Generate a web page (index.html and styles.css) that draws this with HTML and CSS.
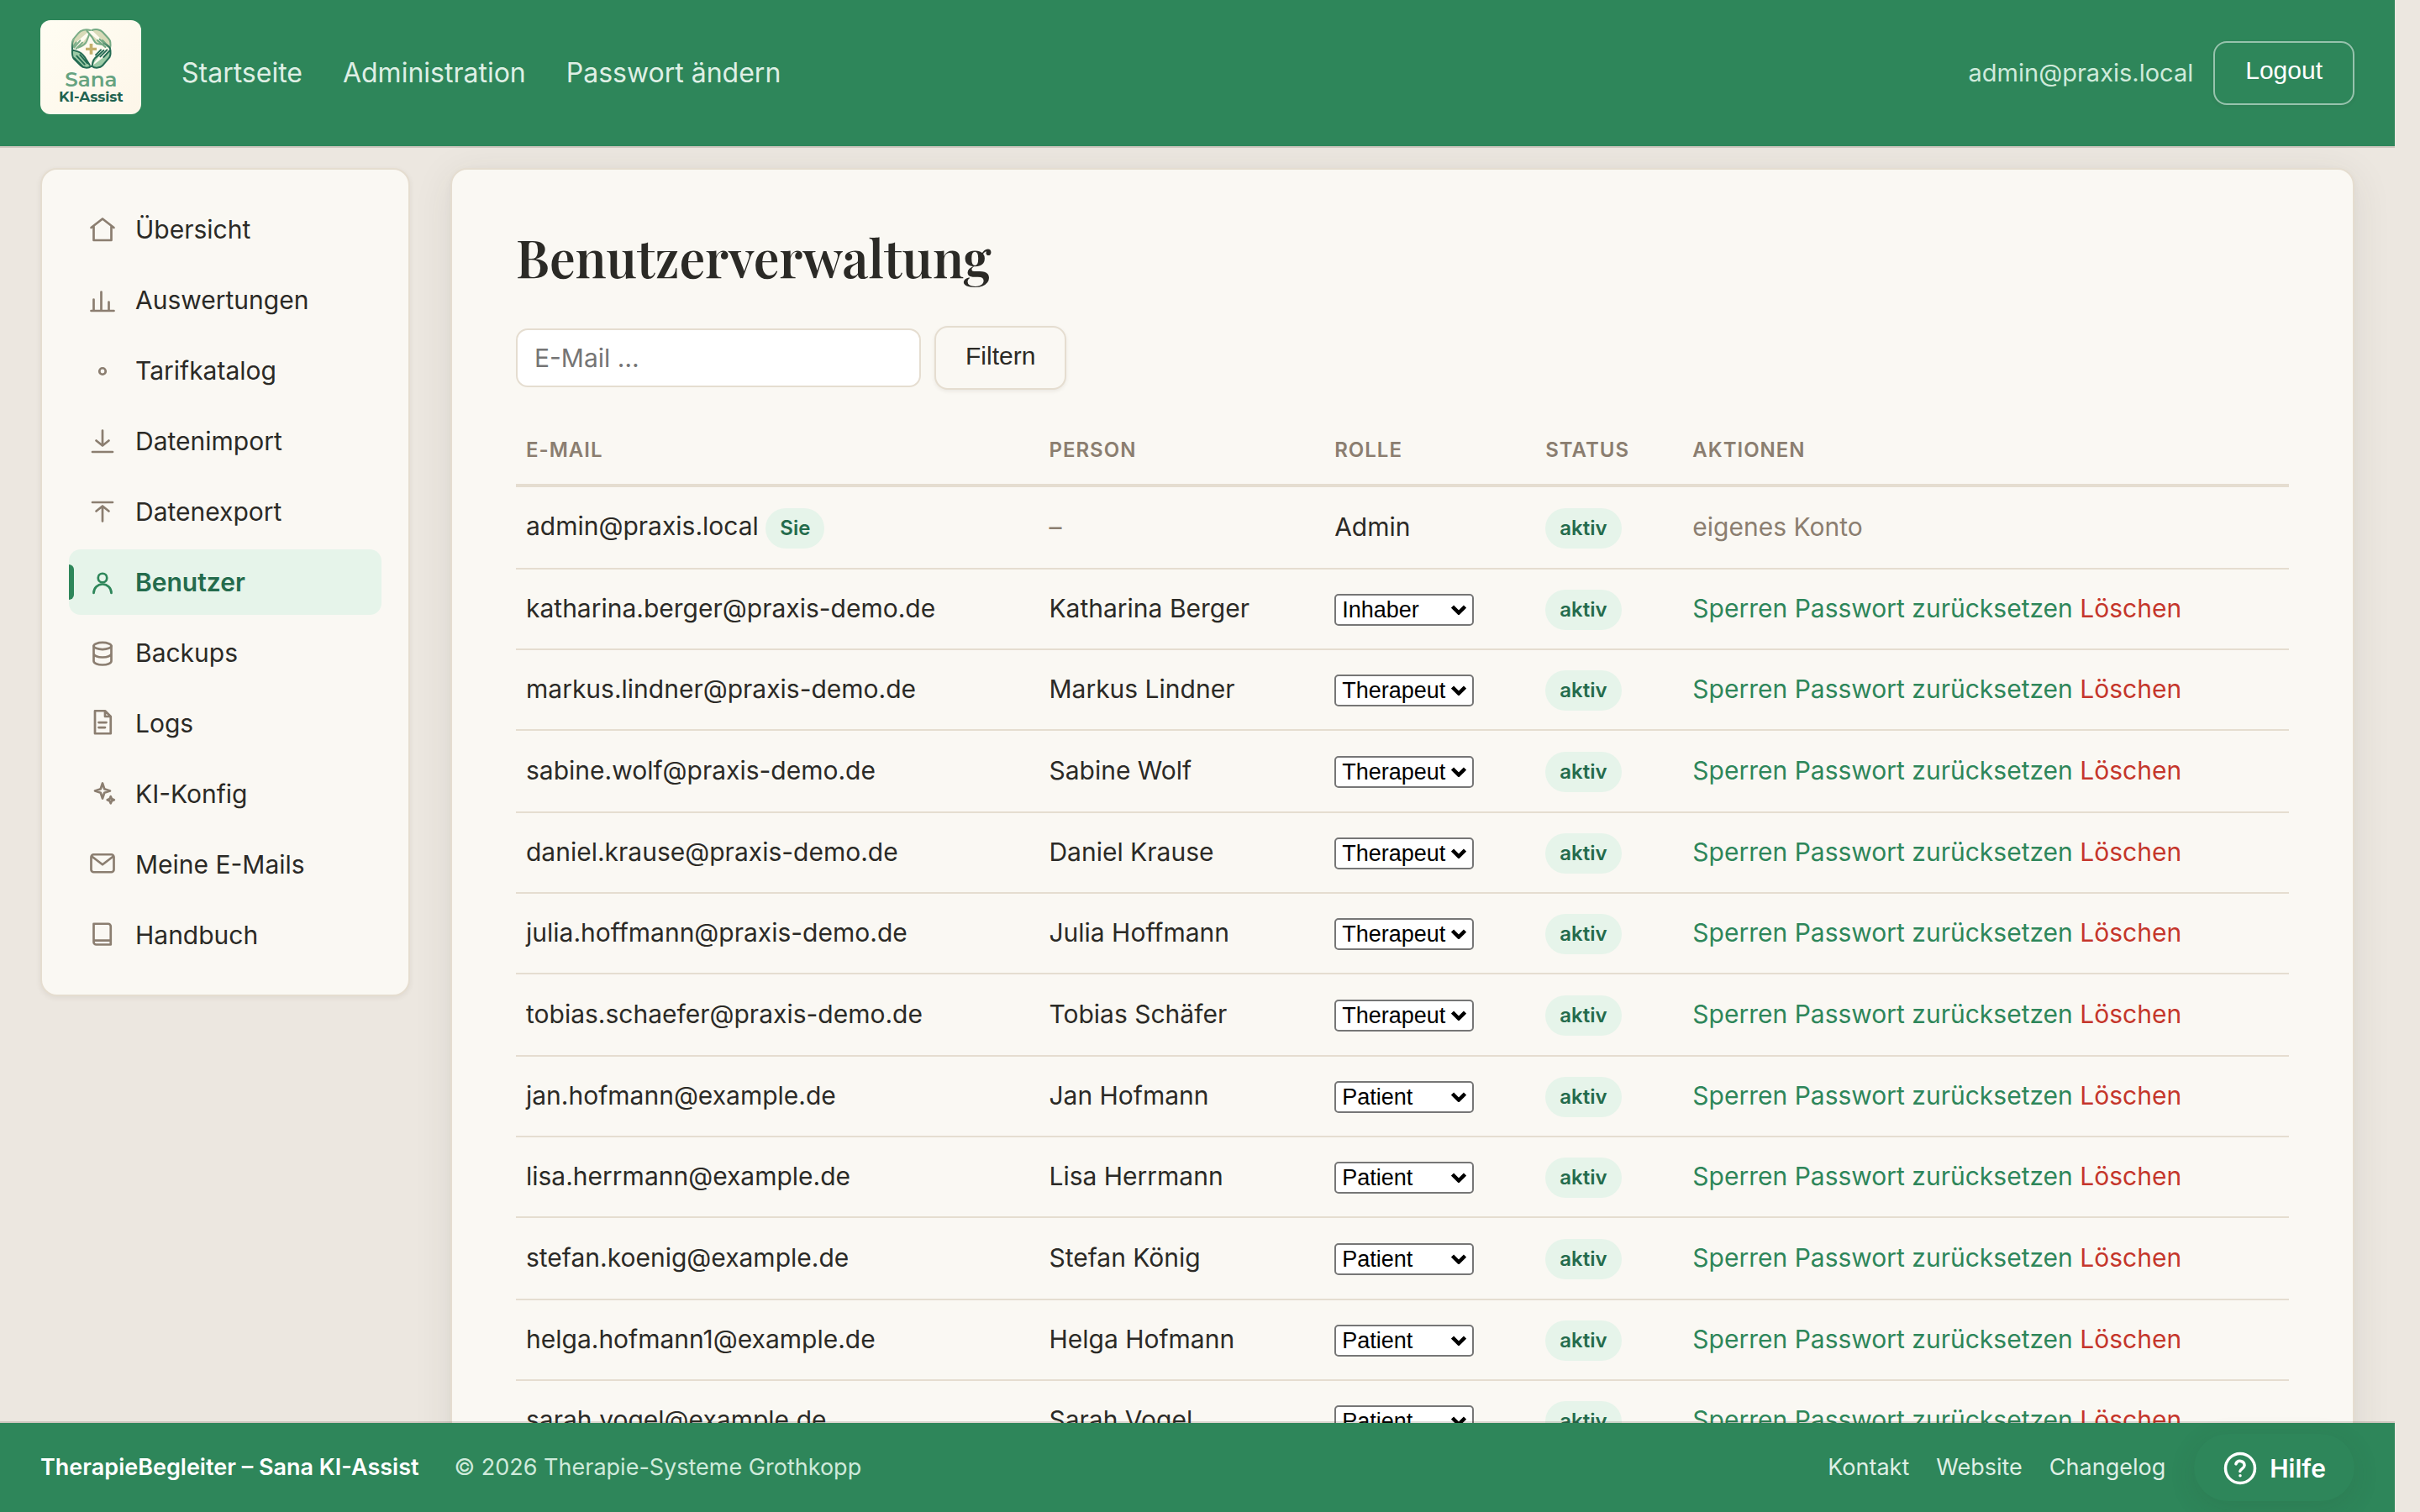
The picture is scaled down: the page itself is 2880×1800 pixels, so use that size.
FILE: index.html
```html
<!DOCTYPE html>
<html lang="de">
<head>
<meta charset="utf-8">
<title>Benutzerverwaltung</title>
<link rel="stylesheet" href="styles.css">
</head>
<body>
<header class="topbar">
  <a class="logo" href="#" aria-label="Sana KI-Assist">
    <svg viewBox="24 24 360 336" aria-hidden="true">
      <defs>
        <linearGradient id="ring" x1="0" y1="0" x2="0" y2="1"><stop offset="0" stop-color="#86b48e"/><stop offset="1" stop-color="#1f6650"/></linearGradient>
      </defs>
      <g stroke-linejoin="round" stroke-linecap="round" stroke-width="6" fill="none">
        <path fill="#d8dab8" stroke="#7dae88" d="M202 60C186 54 168 60 160 70L142 92C136 101 137 108 138 122L152 103M145 122L166 97M152 126L174 104M160 122C176 116 186 110 190 98L198 76"/>
        <path fill="#d8dab8" stroke="#74a983" d="M208 60C222 54 238 58 246 66L268 90C276 99 276 110 273 124L246 96M264 118L236 92M256 120L228 96M250 112L226 108C216 104 216 96 208 84L190 62"/>
        <path fill="#9ccaa6" stroke="#246b53" d="M206 188C194 198 176 194 168 186L144 162C137 154 137 144 138 130L158 136C172 140 178 150 184 158L200 184M154 152L182 182M166 148L192 178M146 160L176 190"/>
        <path fill="#9ccaa6" stroke="#246b53" d="M208 188C220 198 238 194 246 186L268 160C277 152 275 142 274 130L250 156M262 130L238 154M250 132L228 152C216 160 210 172 210 184M240 130L222 148"/>
        <path stroke="url(#ring)" d="M138 126C137 112 137 104 143 94M273 126C270 114 262 112 250 106"/>
      </g>
      <path fill="#c4b06c" d="M200 108h11v14h14v10h-14v14h-11v-14h-14v-10h14z"/>
      <text class="logo-name" x="205" y="262" text-anchor="middle">Sana</text>
      <text class="logo-sub" x="205" y="315" text-anchor="middle">KI-Assist</text>
    </svg>
  </a>
  <nav class="topnav" aria-label="Hauptnavigation">
    <a href="#">Startseite</a>
    <a href="#">Administration</a>
    <a href="#">Passwort ändern</a>
  </nav>
  <div class="account">
    <span class="account-mail">admin@praxis.local</span>
    <button class="btn btn-ghost" type="button">Logout</button>
  </div>
</header>

<div class="scroll">
  <nav class="card sidebar" aria-label="Administration">
    <a href="#"><svg class="icon" viewBox="0 0 24 24"><path d="M3 10l9-7 9 7M5 9v11h14V9"/></svg>Übersicht</a>
    <a href="#"><svg class="icon" viewBox="0 0 24 24"><path d="M3 20h18M5 20v-9M11 20V5M17 20v-7"/></svg>Auswertungen</a>
    <a href="#"><svg class="icon" viewBox="0 0 24 24"><circle cx="12" cy="12" r="2.5"/></svg>Tarifkatalog</a>
    <a href="#"><svg class="icon" viewBox="0 0 24 24"><path d="M12 3v12M7 11l5 4 5-4M4 20h16"/></svg>Datenimport</a>
    <a href="#"><svg class="icon" viewBox="0 0 24 24"><path d="M12 19V7M7 11l5-4 5 4M4 4h16"/></svg>Datenexport</a>
    <a href="#" class="active" aria-current="page"><svg class="icon" viewBox="0 0 24 24"><circle cx="12" cy="8" r="3.5"/><path d="M5 20a7 7 0 0 1 14 0"/></svg>Benutzer</a>
    <a href="#"><svg class="icon" viewBox="0 0 24 24"><ellipse cx="12" cy="6" rx="7" ry="2.7"/><path d="M5 6v12c0 1.700 3.100 3 7 3s7-1.300 7-3V6M5 12c0 1.700 3.100 3 7 3s7-1.300 7-3"/></svg>Backups</a>
    <a href="#"><svg class="icon" viewBox="0 0 24 24"><path d="M6 1.500h8l4.500 4.500v13.500H6zM14 1.500v4.500h4.500M9 10.700h6M9 14.700h5"/></svg>Logs</a>
    <a href="#"><svg class="icon" viewBox="0 0 24 24"><path d="M12 3l1.500 4.500L18 9l-4.500 1.500L12 15l-1.500-4.500L6 9l4.500-1.500zM18.500 13.500l.8 1.900 1.900.8-1.900.8-.8 1.900-.8-1.900-1.900-.8 1.900-.8z"/></svg>KI-Konfig</a>
    <a href="#"><svg class="icon" viewBox="0 0 24 24"><rect x="3" y="3.500" width="18" height="14" rx="2"/><path d="M3.500 5l8.500 6.500L20.500 5"/></svg>Meine E-Mails</a>
    <a href="#"><svg class="icon" viewBox="0 0 24 24"><path d="M5 2.500h11.500a2 2 0 0 1 2 2V19H7a2 2 0 0 1-2-2zM5.500 15.800h13"/></svg>Handbuch</a>
  </nav>

  <main class="card content">
    <h1>Benutzerverwaltung</h1>
    <form class="filter">
      <input type="text" aria-label="E-Mail" placeholder="E-Mail …">
      <button class="btn" type="button">Filtern</button>
    </form>
    <table>
      <colgroup><col class="c-mail"><col class="c-person"><col class="c-role"><col class="c-status"><col></colgroup>
      <thead><tr><th>E-Mail</th><th>Person</th><th>Rolle</th><th>Status</th><th>Aktionen</th></tr></thead>
      <tbody>
        <tr><td>admin@praxis.local <span class="badge">Sie</span></td><td class="muted">–</td><td>Admin</td><td><span class="badge">aktiv</span></td><td class="muted">eigenes Konto</td></tr>
        <tr><td>katharina.berger@praxis-demo.de</td><td>Katharina Berger</td><td><select aria-label="Rolle"><option>Inhaber</option></select></td><td><span class="badge">aktiv</span></td><td><a href="#">Sperren</a> <a href="#">Passwort zurücksetzen</a> <a href="#" class="danger">Löschen</a></td></tr>
        <tr><td>markus.lindner@praxis-demo.de</td><td>Markus Lindner</td><td><select aria-label="Rolle"><option>Therapeut</option></select></td><td><span class="badge">aktiv</span></td><td><a href="#">Sperren</a> <a href="#">Passwort zurücksetzen</a> <a href="#" class="danger">Löschen</a></td></tr>
        <tr><td>sabine.wolf@praxis-demo.de</td><td>Sabine Wolf</td><td><select aria-label="Rolle"><option>Therapeut</option></select></td><td><span class="badge">aktiv</span></td><td><a href="#">Sperren</a> <a href="#">Passwort zurücksetzen</a> <a href="#" class="danger">Löschen</a></td></tr>
        <tr><td>daniel.krause@praxis-demo.de</td><td>Daniel Krause</td><td><select aria-label="Rolle"><option>Therapeut</option></select></td><td><span class="badge">aktiv</span></td><td><a href="#">Sperren</a> <a href="#">Passwort zurücksetzen</a> <a href="#" class="danger">Löschen</a></td></tr>
        <tr><td>julia.hoffmann@praxis-demo.de</td><td>Julia Hoffmann</td><td><select aria-label="Rolle"><option>Therapeut</option></select></td><td><span class="badge">aktiv</span></td><td><a href="#">Sperren</a> <a href="#">Passwort zurücksetzen</a> <a href="#" class="danger">Löschen</a></td></tr>
        <tr><td>tobias.schaefer@praxis-demo.de</td><td>Tobias Schäfer</td><td><select aria-label="Rolle"><option>Therapeut</option></select></td><td><span class="badge">aktiv</span></td><td><a href="#">Sperren</a> <a href="#">Passwort zurücksetzen</a> <a href="#" class="danger">Löschen</a></td></tr>
        <tr><td>jan.hofmann@example.de</td><td>Jan Hofmann</td><td><select aria-label="Rolle"><option>Patient</option></select></td><td><span class="badge">aktiv</span></td><td><a href="#">Sperren</a> <a href="#">Passwort zurücksetzen</a> <a href="#" class="danger">Löschen</a></td></tr>
        <tr><td>lisa.herrmann@example.de</td><td>Lisa Herrmann</td><td><select aria-label="Rolle"><option>Patient</option></select></td><td><span class="badge">aktiv</span></td><td><a href="#">Sperren</a> <a href="#">Passwort zurücksetzen</a> <a href="#" class="danger">Löschen</a></td></tr>
        <tr><td>stefan.koenig@example.de</td><td>Stefan König</td><td><select aria-label="Rolle"><option>Patient</option></select></td><td><span class="badge">aktiv</span></td><td><a href="#">Sperren</a> <a href="#">Passwort zurücksetzen</a> <a href="#" class="danger">Löschen</a></td></tr>
        <tr><td>helga.hofmann1@example.de</td><td>Helga Hofmann</td><td><select aria-label="Rolle"><option>Patient</option></select></td><td><span class="badge">aktiv</span></td><td><a href="#">Sperren</a> <a href="#">Passwort zurücksetzen</a> <a href="#" class="danger">Löschen</a></td></tr>
        <tr><td>sarah.vogel@example.de</td><td>Sarah Vogel</td><td><select aria-label="Rolle"><option>Patient</option></select></td><td><span class="badge">aktiv</span></td><td><a href="#">Sperren</a> <a href="#">Passwort zurücksetzen</a> <a href="#" class="danger">Löschen</a></td></tr>
      </tbody>
    </table>
  </main>
</div>

<footer class="footer">
  <strong>TherapieBegleiter – Sana KI-Assist</strong>
  <span class="copy">© 2026 Therapie-Systeme Grothkopp</span>
  <nav class="footnav" aria-label="Fußzeile">
    <a href="#">Kontakt</a>
    <a href="#">Website</a>
    <a href="#">Changelog</a>
  </nav>
  <button class="help" type="button">
    <svg viewBox="0 0 24 24" aria-hidden="true"><circle cx="12" cy="12" r="10"/><path d="M9.100 9a3 3 0 0 1 5.800 1c0 2-3 2.500-3 4M12 17h.01"/></svg>
    Hilfe
  </button>
</footer>
</body>
</html>
```
FILE: styles.css
```css
:root {
  --green: #2e865a;
  --green-dark: #246b4c;
  --green-soft: #e6f4ea;
  --paper: #faf8f3;
  --line: #e5ddd0;
  --ink: #2b2a26;
  --muted: #8b7e70;
  --bg: #ece7e0;
}

* { box-sizing: border-box; }

body {
  margin: 0;
  height: 100vh;
  padding-right: 30px;
  display: flex;
  flex-direction: column;
  overflow: hidden;
  background: var(--bg);
  color: var(--ink);
  font: 30px/48px Inter, "Liberation Sans", sans-serif;
}

a { color: var(--green); text-decoration: none; }

/* Header */
.topbar {
  position: relative;
  z-index: 2;
  flex: none;
  display: flex;
  align-items: center;
  gap: 48px;
  height: 174px;
  padding: 24px 48px;
  background: var(--green);
  box-shadow: 0 2px 0 rgba(60, 40, 30, .17);
}
.logo {
  align-self: flex-start;
  width: 120px;
  height: 112px;
  border-radius: 12px;
  background: linear-gradient(135deg, #fffdf3, #fdf6e9);
  overflow: hidden;
}
.logo svg { display: block; width: 100%; height: 100%; }
.logo-name { font: 600 74px Montserrat, Inter, sans-serif; fill: #66a380; }
.logo-sub { font: 700 51px Montserrat, Inter, sans-serif; fill: #1f6350; }
.topnav { display: flex; gap: 48px; font-size: 32px; }
.topnav a { color: #dfefe5; }
.account { display: flex; align-items: center; gap: 24px; margin-left: auto; }
.account-mail { font-size: 29px; color: #cfeadb; }

.btn {
  height: 76px;
  padding: 0 35px 5px;
  border: 2px solid var(--line);
  border-radius: 16px;
  background: var(--paper);
  color: var(--ink);
  font: 30px "Liberation Sans", Arial, sans-serif;
  box-shadow: 0 2px 4px rgba(60, 50, 40, .08);
}
.btn-ghost {
  padding: 0 36px 6px;
  border-color: rgba(255, 255, 255, .5);
  background: transparent;
  color: #fff;
}

/* Page area between header and footer */
.scroll {
  flex: 1;
  min-height: 0;
  display: flex;
  align-items: flex-start;
  gap: 48px;
  padding: 26px 48px;
  overflow: hidden auto;
  scrollbar-width: none;
}
.card {
  border: 2px solid var(--line);
  border-radius: 20px;
  background: var(--paper);
}

/* Sidebar */
.sidebar {
  flex: none;
  width: 440px;
  padding: 32px;
  display: flex;
  flex-direction: column;
  gap: 6px;
  box-shadow: 0 2px 6px rgba(60, 50, 40, .08);
}
.sidebar a {
  position: relative;
  display: flex;
  align-items: center;
  gap: 21px;
  height: 78px;
  padding: 0 22px;
  border-radius: 14px;
  color: var(--ink);
}
.icon {
  width: 36px;
  height: 36px;
  margin-top: 2px;
  fill: none;
  stroke: var(--muted);
  stroke-width: 1.8;
  stroke-linecap: round;
  stroke-linejoin: round;
}
.sidebar .active {
  background: var(--green-soft);
  color: var(--green-dark);
  font-weight: 600;
}
.active .icon { stroke: var(--green); }
.active::before {
  content: "";
  position: absolute;
  left: 0;
  top: 18px;
  bottom: 18px;
  width: 6px;
  border-radius: 0 6px 6px 0;
  background: var(--green);
}

/* Main card */
.content {
  flex: 1;
  min-width: 0;
  padding: 68px 76px;
  box-shadow: 0 8px 48px rgba(60, 50, 40, .09), 0 2px 8px rgba(60, 50, 40, .04);
}
h1 {
  margin: 0 0 46px;
  font: 600 61px/72px "Playfair Display", "Liberation Serif", serif;
}
.filter { display: flex; align-items: center; gap: 16px; margin-bottom: 30px; }
.filter input {
  width: 482px;
  height: 70px;
  padding: 0 20px;
  border: 2px solid var(--line);
  border-radius: 14px;
  background: #fff;
  color: var(--ink);
  font: inherit;
}
.filter input::placeholder { color: #757575; }

table { width: 100%; border-collapse: separate; border-spacing: 0; table-layout: fixed; }
.c-mail { width: 29.5%; }
.c-person { width: 16.1%; }
.c-role { width: 11.9%; }
.c-status { width: 8.3%; }
th {
  height: 86px;
  padding: 2px 12px 0;
  border-bottom: 4px solid var(--line);
  color: var(--muted);
  font-size: 24px;
  font-weight: 600;
  letter-spacing: 1px;
  text-align: left;
  text-transform: uppercase;
}
td {
  height: 96px;
  padding: 0 12px 2px;
  border-bottom: 2px solid var(--line);
  white-space: nowrap;
}
tr:nth-child(3n + 1) td { height: 98px; }
.muted { color: var(--muted); }
.danger { color: #c5362b; }
.badge {
  display: inline-block;
  padding: 0 17px;
  border-radius: 24px;
  background: var(--green-soft);
  color: var(--green-dark);
  font-size: 24px;
  font-weight: 600;
  line-height: 48px;
}
select {
  appearance: none;
  display: block;
  width: 166px;
  height: 38px;
  margin-top: 4px;
  padding: 0 7px;
  border: 2px solid #767676;
  border-radius: 5px;
  background: #fff url("data:image/svg+xml,%3Csvg xmlns='http://www.w3.org/2000/svg' width='18' height='12'%3E%3Cpath d='M1.5 2l7.500 7.500L16.500 2' fill='none' stroke='black' stroke-width='4.5'/%3E%3C/svg%3E") no-repeat right 7px center;
  color: #000;
  font: 27px "Liberation Sans", Arial, sans-serif;
}

/* Footer */
.footer {
  position: relative;
  z-index: 2;
  flex: none;
  display: flex;
  align-items: center;
  height: 106px;
  padding: 0 48px;
  background: var(--green);
  box-shadow: 0 -2px 0 rgba(60, 40, 30, .17);
  color: #cfeadb;
  font-size: 27px;
}
.footer strong { color: #fff; font-weight: 600; }
.copy { margin-left: 42px; }
.footnav { display: flex; gap: 32px; margin: 0 34px 0 auto; }
.footnav a { color: #dfefe5; }
.help {
  display: flex;
  align-items: center;
  gap: 14px;
  height: 80px;
  padding: 2px 34px 0;
  border: 0;
  border-radius: 40px;
  background: var(--green);
  color: #fff;
  font: 600 30px Inter, sans-serif;
  box-shadow: 0 8px 32px rgba(40, 60, 40, .12);
}
.help svg {
  width: 42px;
  height: 42px;
  fill: none;
  stroke: #fff;
  stroke-width: 2;
  stroke-linecap: round;
}
```
